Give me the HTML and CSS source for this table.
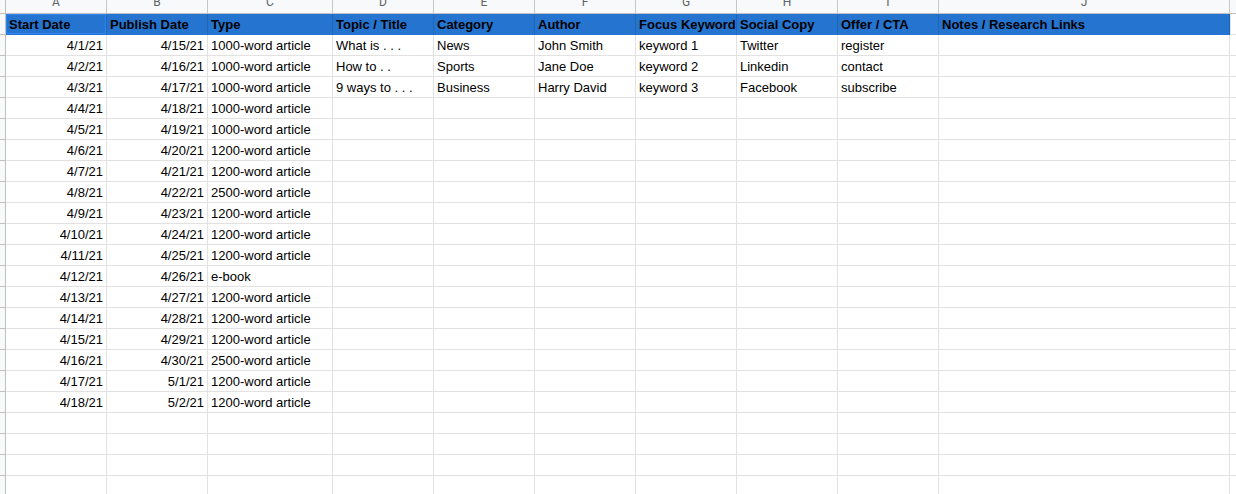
FILE: index.html
```html
<!DOCTYPE html>
<html>
<head>
    <title>Content Calendar</title>
    <link rel="stylesheet" href="styles.css">
</head>
<body>
    <div class="sheet" id="sheet"></div>

    <script>
        const cols = ['A', 'B', 'C', 'D', 'E', 'F', 'G', 'H', 'I', 'J', ''];
        const head = ['Start Date', 'Publish Date', 'Type', 'Topic / Title', 'Category', 'Author', 'Focus Keyword', 'Social Copy', 'Offer / CTA', 'Notes / Research Links', ''];
        const types = ['1000-word article', '1000-word article', '1000-word article', '1000-word article', '1000-word article',
            '1200-word article', '1200-word article', '2500-word article', '1200-word article', '1200-word article',
            '1200-word article', 'e-book', '1200-word article', '1200-word article', '1200-word article',
            '2500-word article', '1200-word article', '1200-word article'];
        const extra = [
            ['What is . . .', 'News', 'John Smith', 'keyword 1', 'Twitter', 'register'],
            ['How to . .', 'Sports', 'Jane Doe', 'keyword 2', 'Linkedin', 'contact'],
            ['9 ways to . . .', 'Business', 'Harry David', 'keyword 3', 'Facebook', 'subscribe']
        ];

        const sheet = document.getElementById('sheet');
        let html = '<div class="corner"></div>';
        cols.forEach(c => html += '<div class="colhead' + (c ? '' : ' last') + '"><span>' + c + '</span></div>');

        html += '<div class="rowhead"></div>';
        head.forEach((h, i) => html += '<div class="cell title' + (i === 0 ? ' active' : '') + (h ? '' : ' blank') + '">' + h + '</div>');

        for (let r = 0; r < 22; r++) {
            let row = Array(11).fill('');
            if (r < 18) {
                const start = new Date(2021, 3, 1 + r);
                const pub = new Date(2021, 3, 15 + r);
                row[0] = (start.getMonth() + 1) + '/' + start.getDate() + '/21';
                row[1] = (pub.getMonth() + 1) + '/' + pub.getDate() + '/21';
                row[2] = types[r];
                if (extra[r]) extra[r].forEach((v, i) => row[3 + i] = v);
            }
            html += '<div class="rowhead"></div>';
            row.forEach((v, i) => html += '<div class="cell' + (i < 2 ? ' num' : '') + (i === 10 ? ' blank' : '') + '">' + v + '</div>');
        }
        sheet.innerHTML = html;
    </script>
</body>
</html>
```

FILE: styles.css
```css
body { margin: 0; overflow: hidden; background: #fff; font-family: "Liberation Sans", Arial, sans-serif; }
.sheet {
    display: grid;
    grid-template-columns: 6px 101px 101px 125px 101px 101px 101px 101px 101px 101px 291px 1fr;
    grid-auto-rows: 21px;
    grid-template-rows: 14px;
    width: 1236px;
}
.corner, .rowhead { background: #f8f9fa; border-right: 1px solid #c0c0c0; border-bottom: 1px solid #c0c0c0; box-sizing: border-box; }
.colhead {
    background: #f8f9fa; border-right: 1px solid #c7c7c7; border-bottom: 1px solid #c0c0c0;
    box-sizing: border-box; overflow: hidden; text-align: center;
    font-family: Roboto, "Liberation Sans", sans-serif; font-size: 12px; color: #5f6368;
}
.colhead span { display: block; line-height: 12px; margin-top: -4px; }
.colhead.last { border-right: none; }
.cell {
    border-right: 1px solid #e2e2e2; border-bottom: 1px solid #e2e2e2;
    box-sizing: border-box; padding: 0 3px; font-size: 13px; line-height: 21px; color: #000;
    white-space: nowrap; overflow: hidden;
}
.cell.num { text-align: right; }
.cell.blank { border-right: none; }
.cell.title { background: #2574d0; font-weight: bold; border-right-color: #1f66b9; border-bottom-color: #2574d0; overflow: visible; }
.cell.title.blank { background: #fff; border-bottom-color: #e2e2e2; border-left: 1px solid #e2e2e2; }
.cell.active { box-shadow: inset 0 0 0 1px #2f86f2; }
```
